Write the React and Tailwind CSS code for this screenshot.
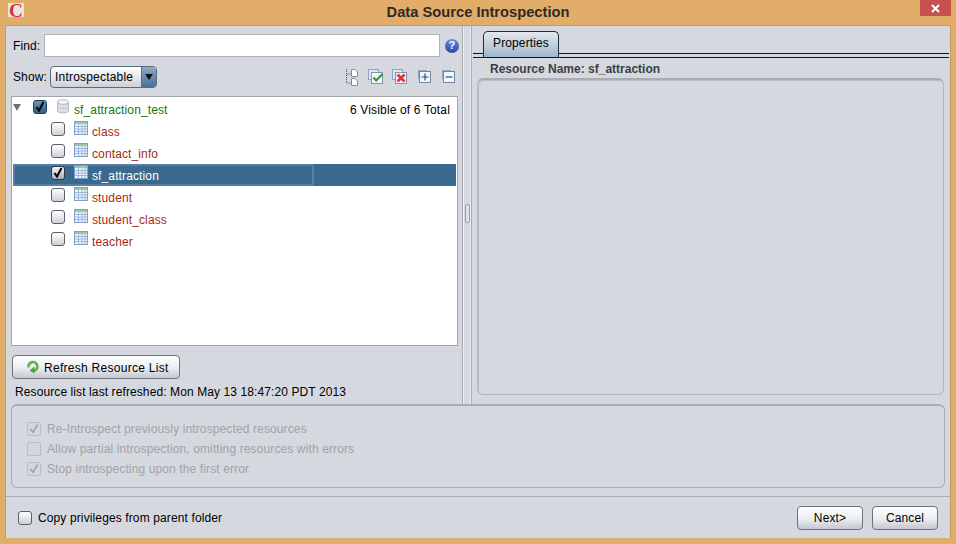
const tables = [
  { name: 'class' },
  { name: 'contact_info' },
  { name: 'sf_attraction', selected: true },
  { name: 'student' },
  { name: 'student_class' },
  { name: 'teacher' }
]

const options = [
  { label: 'Re-Introspect previously introspected resources', checked: true },
  { label: 'Allow partial introspection, omitting resources with errors', checked: false },
  { label: 'Stop introspecting upon the first error', checked: true }
]

function Checkbox({ checked, dark }) {
  const look = dark
    ? 'border-[#1d3b57] bg-gradient-to-b from-[#6f93b3] to-[#2f5f89]'
    : checked
      ? 'border-[#33373d] bg-gradient-to-b from-[#f4f5f7] to-[#a9adb6]'
      : 'border-[#5b5f66] bg-gradient-to-b from-white to-[#ccd0d8]'
  return (
    <div className={`relative w-[14px] h-[14px] shrink-0 rounded-[3px] border ${look}`}>
      {(checked || dark) && (
        <svg width="14" height="14" viewBox="0 0 14 14" className="absolute -left-px -top-px" fill="none">
          <path d="M3.5 7 L6 10.5 L10.5 2" strokeWidth="2" stroke="#000" />
        </svg>
      )}
    </div>
  )
}

function DisabledCheckbox({ checked }) {
  return (
    <div className="relative w-[14px] h-[14px] shrink-0 rounded-[2px] border border-[#b9bcc3] bg-[#d3d6dd]">
      {checked && (
        <svg width="14" height="14" viewBox="0 0 14 14" className="absolute -left-px -top-px" fill="none">
          <path d="M3.5 7 L6 10.5 L10.5 2.5" strokeWidth="1.4" stroke="#9a9da4" />
        </svg>
      )}
    </div>
  )
}

function TableIcon() {
  return (
    <svg width="14" height="14" viewBox="0 0 14 14" className="shrink-0">
      <rect x="0.5" y="0.5" width="13" height="13" fill="#eef3fb" stroke="#7f9fcf" />
      <rect x="1" y="1" width="12" height="2" fill="#9cc6a0" />
      <path d="M1 5.5H13M1 8H13M1 10.5H13M4.5 3V13M8 3V13M11 3V13" stroke="#9db8de" strokeWidth="1" />
    </svg>
  )
}

function DbIcon() {
  return (
    <svg width="12" height="15" viewBox="0 0 12 15" className="shrink-0">
      <path d="M0.5 3 V12 C0.5 14.6 11.5 14.6 11.5 12 V3 Z" fill="#dcdfe5" stroke="#b4b8c0" />
      <ellipse cx="6" cy="3" rx="5.5" ry="2.3" fill="#f4f5f7" stroke="#b4b8c0" />
      <path d="M1 8 C2 10 10 10 11 8" stroke="#c1c5cc" fill="none" />
    </svg>
  )
}

function TreeIcon() {
  return (
    <svg width="13" height="18" viewBox="0 0 13 18" fill="none">
      <path d="M1.5 1V15H6M1.5 6H6" stroke="#555" strokeDasharray="1 1" />
      <path d="M6.5 1.5H10L12.5 4V8.5H6.5Z" fill="#fff" stroke="#8a8a8a" />
      <path d="M6.5 10.5H10L12.5 13V17.5H6.5Z" fill="#fff" stroke="#8a8a8a" />
    </svg>
  )
}

function CheckAllIcon() {
  return (
    <svg width="16" height="15" viewBox="0 0 16 15" fill="none">
      <rect x="0.5" y="0.5" width="10" height="10" fill="#dfe6f1" stroke="#8ea3bf" />
      <rect x="3.5" y="3.5" width="11" height="11" fill="#f4f7fa" stroke="#7f93ad" />
      <path d="M5.5 8.5 L8.2 11.5 L14.5 5" stroke="#2c9a3c" strokeWidth="2.2" />
    </svg>
  )
}

function UncheckAllIcon() {
  return (
    <svg width="15" height="15" viewBox="0 0 15 15" fill="none">
      <rect x="0.5" y="0.5" width="10" height="10" fill="#dfe6f1" stroke="#8ea3bf" />
      <rect x="3.5" y="3.5" width="11" height="11" fill="#f4f7fa" stroke="#7f93ad" />
      <path d="M5.5 5.5 L12.5 12.5 M12.5 5.5 L5.5 12.5" stroke="#e0343a" strokeWidth="2.8" />
    </svg>
  )
}

function BoxIcon({ plus }) {
  return (
    <svg width="13" height="13" viewBox="0 0 13 13" fill="none">
      <rect x="0.5" y="0.5" width="8" height="8" fill="#dfe6f1" stroke="#8ea3bf" />
      <rect x="1.5" y="1.5" width="11" height="11" fill="#f4f7fa" stroke="#6f87a6" />
      <path d={plus ? 'M3.5 7H10.5M7 3.5V10.5' : 'M3.5 7H10.5'} stroke="#1f4f86" strokeWidth="1.2" />
    </svg>
  )
}

function RefreshIcon() {
  return (
    <svg width="14" height="14" viewBox="0 0 14 14" fill="none">
      <path d="M2.5 7.5 A4.5 4.5 0 1 1 7.5 11" stroke="#5fb24f" strokeWidth="2.6" />
      <path d="M8.5 6.5 L3.5 10.5 L8.5 13.5 Z" fill="#4ea341" />
      <path d="M4.5 6 A3 3 0 0 1 9 4" stroke="#bfe8a8" strokeWidth="1" />
    </svg>
  )
}

function Button({ className = '', children }) {
  return (
    <button className={`h-6 rounded-[4px] border border-[#6f737a] bg-gradient-to-b from-[#fdfdfe] via-[#eef0f3] to-[#c4c8d0] text-black flex items-center ${className}`}>
      {children}
    </button>
  )
}

export default function App() {
  return (
    <div
      className="w-[956px] h-[544px] overflow-hidden bg-[#e2ac69] flex flex-col text-xs tracking-[0.12px] text-black"
      style={{ fontFamily: '"Liberation Sans", Arial, sans-serif' }}
    >
      {/* title bar */}
      <header className="relative h-[25px] shrink-0 flex items-center justify-center">
        <div className="absolute left-2 top-[3px] w-4 h-[14px] bg-[#ece4da] flex items-center justify-center pt-[2px] text-[#d0323f] font-bold text-[19px] leading-[14px]" style={{ fontFamily: '"Liberation Serif", serif' }}>C</div>
        <span className="text-[14.7px] tracking-normal font-bold text-[#2e2a26]">Data Source Introspection</span>
        <div className="absolute right-[5px] top-0 w-[31px] h-[16px] bg-[#c75050] flex items-center justify-center">
          <svg width="9" height="9" viewBox="0 0 9 9" fill="none">
            <path d="M1 1L8 8M8 1L1 8" stroke="#fff" strokeWidth="2" />
          </svg>
        </div>
      </header>

      <main className="mx-[5px] mb-[6px] flex-1 min-h-0 flex flex-col bg-[#d5d8df] border-t border-x border-[#c09a68]">
        <div className="h-[378px] shrink-0 flex">
          {/* left side */}
          <section className="w-[456px] shrink-0 flex flex-col pl-[5px]">
            <div className="h-[23px] mt-[8px] flex items-center">
              <span className="w-[33px] pl-[2px]">Find:</span>
              <input className="w-[396px] h-[23px] bg-white border border-[#b0b3b9] outline-none" />
              <div className="ml-[5px] w-[14px] h-[14px] rounded-full bg-gradient-to-b from-[#6a88dc] to-[#2b46ad] flex items-center justify-center text-white font-bold text-[11px] leading-none">?</div>
            </div>

            <div className="h-[21px] mt-[9px] flex items-center">
              <span className="w-[39px] pl-[2px]">Show:</span>
              <div className="w-[107px] h-[22px] rounded-[4px] border border-[#596b80] bg-gradient-to-b from-white to-[#ccd0d8] flex overflow-hidden">
                <span className="flex-1 pl-[4px] leading-[20px] tracking-[0.2px]">Introspectable</span>
                <div className="w-[15px] bg-gradient-to-b from-[#8fa9c0] to-[#47709a] border-l border-[#596b80] flex items-center justify-center">
                  <svg width="8" height="6" viewBox="0 0 8 6"><path d="M0 0H8L4 6Z" fill="#111" /></svg>
                </div>
              </div>
              <div className="ml-[188px] flex items-center">
                <TreeIcon />
                <div className="ml-[10px]"><CheckAllIcon /></div>
                <div className="ml-[8px]"><UncheckAllIcon /></div>
                <div className="ml-[11px]"><BoxIcon plus /></div>
                <div className="ml-[11px]"><BoxIcon /></div>
              </div>
            </div>

            {/* resource tree */}
            <div className="mt-[9px] h-[250px] w-[447px] bg-white border border-[#a2a5ab] pt-px px-px">
              <div className="h-[22px] flex items-center pr-[6px]">
                <svg width="8" height="7" viewBox="0 0 8 7" className="mr-[12px] mb-[3px] shrink-0"><path d="M0 0H8L4 7Z" fill="#6f7175" /></svg>
                <div className="mb-[4px]"><Checkbox dark /></div>
                <div className="ml-[10px] mb-[6px]"><DbIcon /></div>
                <span className="ml-[5px] mt-[2px] text-[#0b7a0b]">sf_attraction_test</span>
                <span className="ml-auto mt-[2px] tracking-[0.15px]">6 Visible of 6 Total</span>
              </div>
              {tables.map(table => (
                <div
                  key={table.name}
                  className={`relative h-[22px] flex items-center ${table.selected ? 'bg-[#3a6a8e]' : ''}`}
                >
                  {table.selected && <div className="absolute left-0 top-0 w-[301px] h-[22px] border-2 border-[#6b93c4]/50" />}
                  <div className="relative ml-[38px] mb-[4px]">
                    <Checkbox checked={table.selected} />
                  </div>
                  <div className="relative ml-[9px] mb-[6px]"><TableIcon /></div>
                  <span className={`relative ml-[4px] mt-[2px] ${table.selected ? 'text-white' : 'text-[#a52a1a]'}`}>{table.name}</span>
                </div>
              ))}
            </div>

            <Button className="mt-[9px] w-[168px] ml-px pl-[13px] gap-[4px]">
              <RefreshIcon />
              <span className="pt-px tracking-[0.28px]">Refresh Resource List</span>
            </Button>
            <p className="mt-[5px] ml-[4px] tracking-[0.1px]">Resource list last refreshed: Mon May 13 18:47:20 PDT 2013</p>
          </section>

          {/* splitter */}
          <div className="w-[10px] shrink-0 border-x border-[#a8abb2] shadow-[inset_1px_0_0_#eef0f3,inset_-1px_0_0_#eef0f3] flex items-center justify-center">
            <div className="w-[5px] h-[19px] mb-[4px] border border-[#9a9da4] rounded-[2px] bg-[#dfe2e8]" />
          </div>

          {/* right side */}
          <section className="flex-1 min-w-0 flex flex-col">
            <div className="pt-[5px] h-[32px] pl-px">
              <div className="relative h-[26px] -mb-[4px] ml-[10px] w-[76px] rounded-t-[5px] border border-b-0 border-[#1c2c3c] bg-gradient-to-b from-[#e3e8ee] to-[#9fb7cb] flex items-center justify-center pb-[4px]">Properties</div>
              <div className="h-[5px] border-y border-y-[#0d1626] bg-[#cfd9e6] mr-[1px]" />
            </div>
            <p className="pl-[18px] mt-[3px] font-bold tracking-normal text-[#3c3f44]">Resource Name: sf_attraction</p>
            <div className="mt-px ml-[5px] mr-[6px] h-[317px] rounded-[6px] border border-[#b4b7be] border-t-2 border-t-[#a9acb3] shadow-[inset_1px_1px_1px_#b9bcc3] bg-[#d5d8df]" />
          </section>
        </div>

        {/* introspection options */}
        <fieldset className="mx-[5px] h-[84px] shrink-0 rounded-[6px] border border-[#a9acb3] border-t-2 pt-[16px] pl-[15px] flex flex-col gap-[6px]">
          {options.map(opt => (
            <label key={opt.label} className="flex items-center gap-[6px] h-[14px] text-[#a0a3a9]">
              <DisabledCheckbox checked={opt.checked} />
              {opt.label}
            </label>
          ))}
        </fieldset>

        {/* footer */}
        <footer className="mt-[8px] flex-1 border-t border-[#a8abb2] flex items-center pl-[12px] pr-[12px]">
          <Checkbox />
          <span className="ml-[6px] pt-px">Copy privileges from parent folder</span>
          <Button className="ml-auto w-[66px] justify-center pt-px">Next&gt;</Button>
          <Button className="ml-[9px] w-[66px] justify-center pt-px">Cancel</Button>
        </footer>
      </main>
    </div>
  )
}
